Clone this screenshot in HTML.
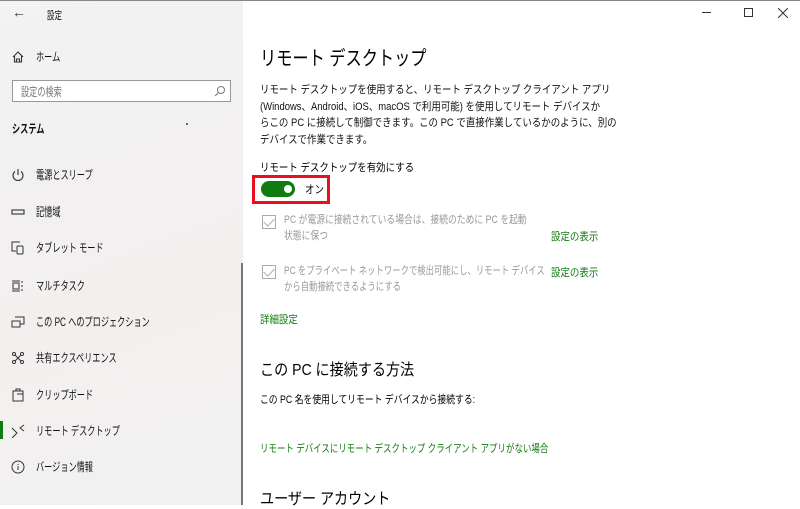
<!DOCTYPE html>
<html><head><meta charset="utf-8"><style>
*{margin:0;padding:0;box-sizing:border-box}
body{width:800px;height:505px;overflow:hidden;background:#fff;font-family:"Liberation Sans","Noto Sans CJK JP",sans-serif;color:#000;position:relative}
.side{position:absolute;left:0;top:0;width:243px;height:505px;background:linear-gradient(160deg,#f3f3f3 0%,#f2f0f0 40%,#f3efef 60%,#f2f2f2 100%)}
.t{position:absolute;white-space:nowrap;transform-origin:0 0}
.nav{font-size:12px;color:#111;transform:scaleX(0.68)}
.c{transform:scaleX(0.86)}
.ico{position:absolute;left:11px;width:14px;height:14px}
.g{color:#107c10}
.gr{color:#999}
.cb{position:absolute;width:14px;height:14px;border:1px solid #aaa}
.cb:after{content:"";position:absolute;left:3px;top:0px;width:5px;height:9px;border:solid #aaa;border-width:0 1px 1px 0;transform:rotate(45deg)}
</style></head><body>
<div class="side"></div>
<div style="position:absolute;left:0;top:0;width:800px;height:1px;background:#888"></div>
<div class="t" style="left:12px;top:4px;font-size:14px;color:#333">←</div>
<div class="t nav" style="left:47px;top:7px;font-size:11px">設定</div>
<svg class="ico" style="top:50px" viewBox="0 0 14 14"><path d="M2 7L7 2l5 5M3.5 6v6h7V6M5.5 12V9h3v3" fill="none" stroke="#333" stroke-width="1.1"/></svg>
<div class="t nav" style="left:36px;top:48px">ホーム</div>
<div style="position:absolute;left:12px;top:80px;width:219px;height:22px;border:1px solid #999;background:#fff"></div>
<div class="t nav" style="left:21px;top:83px;color:#777">設定の検索</div>
<svg style="position:absolute;left:214px;top:85px" width="12" height="12" viewBox="0 0 12 12"><circle cx="7" cy="5" r="3.5" fill="none" stroke="#777"/><path d="M4.5 7.5L1 11" stroke="#777"/></svg>
<div class="t nav" style="left:12px;top:120px;font-weight:bold">システム</div>
<div style="position:absolute;left:186px;top:123px;width:2px;height:2px;background:#666"></div>
<svg class="ico" style="top:168px" viewBox="0 0 14 14"><path d="M4 3.5A5 5 0 1 0 10 3.5M7 1v6" fill="none" stroke="#333" stroke-width="1.1"/></svg>
<div class="t nav" style="left:36px;top:166px">電源とスリープ</div>
<svg class="ico" style="top:205px" viewBox="0 0 14 14"><rect x="1" y="5" width="12" height="4" fill="none" stroke="#333" stroke-width="1.1"/></svg>
<div class="t nav" style="left:36px;top:203px">記憶域</div>
<svg class="ico" style="top:241px" viewBox="0 0 14 14"><path d="M9 1H1v9h4" fill="none" stroke="#333"/><rect x="6" y="5" width="6" height="8" rx="1" fill="none" stroke="#333"/></svg>
<div class="t nav" style="left:36px;top:239px">タブレット モード</div>
<svg class="ico" style="top:279px" viewBox="0 0 14 14"><path d="M1 2h8M1 12h8M2 4h6v6H2zM11 2v2M11 6v2M11 10v2" fill="none" stroke="#333"/></svg>
<div class="t nav" style="left:36px;top:277px">マルチタスク</div>
<svg class="ico" style="top:315px" viewBox="0 0 14 14"><path d="M4 2h9v7H9M1 6h8v6H1z" fill="none" stroke="#333"/></svg>
<div class="t nav" style="left:36px;top:313px">この PC へのプロジェクション</div>
<svg class="ico" style="top:351px" viewBox="0 0 14 14"><path d="M3 3l8 8M11 3l-8 8" stroke="#333"/><circle cx="3" cy="3" r="1.5" fill="#fff" stroke="#333"/><circle cx="11" cy="3" r="1.5" fill="#fff" stroke="#333"/><circle cx="3" cy="11" r="1.5" fill="#fff" stroke="#333"/><circle cx="11" cy="11" r="1.5" fill="#fff" stroke="#333"/></svg>
<div class="t nav" style="left:36px;top:349px">共有エクスペリエンス</div>
<svg class="ico" style="top:388px" viewBox="0 0 14 14"><path d="M2 3h10v10H2zM5 3V1h4v2M6 6h6v7" fill="none" stroke="#333"/></svg>
<div class="t nav" style="left:36px;top:386px">クリップボード</div>
<div style="position:absolute;left:0;top:421px;width:3px;height:18px;background:#107c10"></div>
<svg class="ico" style="top:424px" viewBox="0 0 14 14"><path d="M1 4l5 5-5 5M13 1L9 4l4 3" fill="none" stroke="#333"/></svg>
<div class="t nav" style="left:36px;top:422px">リモート デスクトップ</div>
<svg class="ico" style="top:460px" viewBox="0 0 14 14"><circle cx="7" cy="7" r="6" fill="none" stroke="#333"/><path d="M7 6v4M7 4v1" stroke="#333"/></svg>
<div class="t nav" style="left:36px;top:458px">バージョン情報</div>
<div style="position:absolute;left:241px;top:263px;width:2px;height:242px;background:#777"></div>
<div style="position:absolute;left:702px;top:12px;width:9px;height:1px;background:#333"></div>
<div style="position:absolute;left:744px;top:8px;width:9px;height:9px;border:1px solid #333"></div>
<svg style="position:absolute;left:778px;top:8px" width="10" height="10" viewBox="0 0 10 10"><path d="M0 0L10 10M10 0L0 10" stroke="#333"/></svg>
<div class="t" style="left:260px;top:42px;font-size:20px;transform:scaleX(0.81)">リモート デスクトップ</div>
<div class="t" style="left:260px;top:82px;font-size:11px;line-height:16.5px;color:#111;transform:scaleX(0.86)">リモート デスクトップを使用すると、リモート デスクトップ クライアント アプリ<br>(Windows、Android、iOS、macOS で利用可能) を使用してリモート デバイスか<br>らこの PC に接続して制御できます。この PC で直接作業しているかのように、別の<br>デバイスで作業できます。</div>
<div class="t c" style="left:260px;top:159px;font-size:11px">リモート デスクトップを有効にする</div>
<div style="position:absolute;left:252px;top:175px;width:78px;height:29px;border:3px solid #e8101c"></div>
<div style="position:absolute;left:261px;top:181px;width:34px;height:16px;border-radius:8px;background:#107c10"></div>
<div style="position:absolute;left:284px;top:185px;width:8px;height:8px;border-radius:50%;background:#fff"></div>
<div class="t c" style="left:305px;top:181px;font-size:11px">オン</div>
<div class="cb" style="left:262px;top:215px"></div>
<div class="t gr" style="left:284px;top:212px;font-size:11px;line-height:16px;transform:scaleX(0.8)">PC が電源に接続されている場合は、接続のために PC を起動<br>状態に保つ</div>
<div class="t g c" style="left:551px;top:228px;font-size:11px">設定の表示</div>
<div class="cb" style="left:262px;top:265px"></div>
<div class="t gr" style="left:284px;top:263px;font-size:11px;line-height:16px;transform:scaleX(0.76)">PC をプライベート ネットワークで検出可能にし、リモート デバイス<br>から自動接続できるようにする</div>
<div class="t g c" style="left:551px;top:264px;font-size:11px">設定の表示</div>
<div class="t g c" style="left:260px;top:311px;font-size:11px">詳細設定</div>
<div class="t" style="left:260px;top:356px;font-size:16px;transform:scaleX(0.88)">この PC に接続する方法</div>
<div class="t" style="left:260px;top:391px;font-size:11px;transform:scaleX(0.8)">この PC 名を使用してリモート デバイスから接続する:</div>
<div class="t g" style="left:260px;top:440px;font-size:11px;transform:scaleX(0.77)">リモート デバイスにリモート デスクトップ クライアント アプリがない場合</div>
<div class="t" style="left:260px;top:485px;font-size:16px;transform:scaleX(0.88)">ユーザー アカウント</div>
</body></html>
